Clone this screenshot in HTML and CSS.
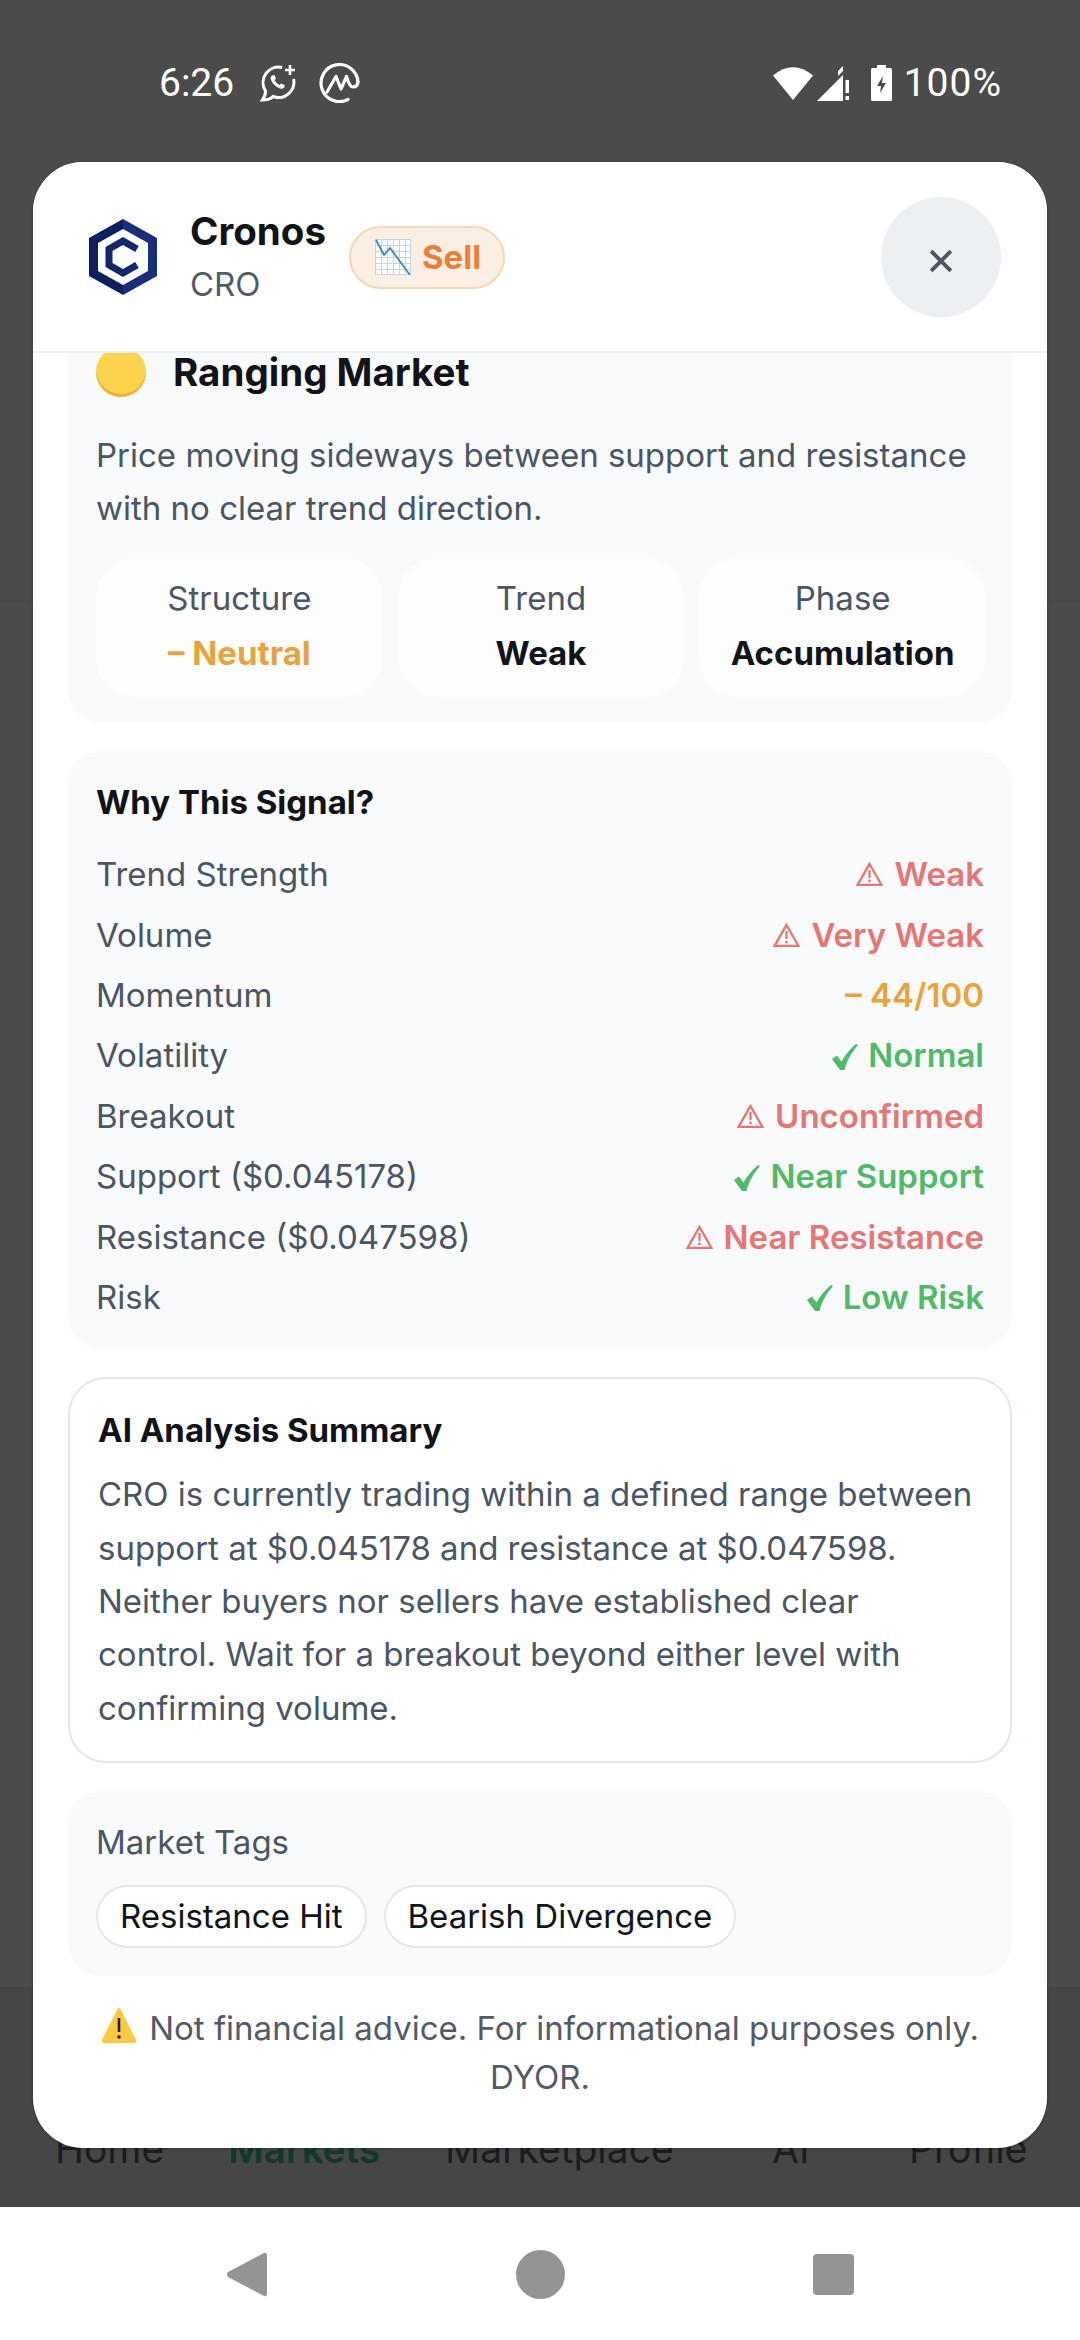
FILE: index.html
```html
<!DOCTYPE html>
<html lang="en">
<head>
    <meta charset="UTF-8">
    <title>Cronos signal</title>
    <link rel="stylesheet" href="styles.css">
</head>
<body>

<div class="phone">
  <svg width="0" height="0" class="defs">
    <symbol id="warn" viewBox="0 0 27 24">
      <path d="M13.500 2L25.500 23H1.500Z" fill="none" stroke="currentColor" stroke-width="2.400"/>
      <path d="M13.500 8V16" stroke="currentColor" stroke-width="2.200"/>
      <circle cx="13.500" cy="19" r="1.400" fill="currentColor"/>
    </symbol>
    <symbol id="tick" viewBox="0 0 26 26">
      <path d="M26 1C20 8 15 16 12.500 26H8L0 15L5 11.500L9.500 17.500C13 11 18 5 24 0Z" fill="currentColor"/>
    </symbol>
  </svg>
  <div class="screen">
    <div class="status-bar">
      <div class="status-left">
        <span class="clock">6:26</span>
        <svg class="ic-wa" viewBox="0 0 37 38" fill="none" stroke="#fff" stroke-width="3">
          <path d="M22 3.500A15.500 15.500 0 0 0 5.500 27Q5.500 32 2.500 36Q10 36 13 32.500A15.500 15.500 0 0 0 33.600 15"/>
          <path d="M12 11.500Q10 13 11 16Q13.500 22 20 24.500Q23 25.500 24.500 23L24.500 21L21 19.500L19.500 21Q16 19.500 14.500 16L16 14.500L14.500 11Z" fill="#fff" stroke="none"/>
          <path d="M30 1V11M25 6H35" stroke-width="2.600"/>
        </svg>
        <svg class="ic-cmc" viewBox="0 0 41 40" fill="none" stroke="#fff" stroke-width="3.200" stroke-linecap="round" stroke-linejoin="round">
          <path d="M29 36.500A18.500 18.500 0 1 1 39 19"/>
          <path d="M8 29L17 13.500L22 26L27.500 13.500Q30.500 24 34 24Q38.500 24 39 19"/>
        </svg>
      </div>
      <div class="status-right">
        <svg class="ic-wifi" viewBox="0 0 40 34"><path d="M0 9.500Q20 -7 40 9.500L20 34Z" fill="#fff"/></svg>
        <svg class="ic-signal" viewBox="0 0 33 35">
          <path d="M0 35L26 9V35Z" fill="#fff"/>
          <path d="M26 0V5L21 10V5Z" fill="#fff"/>
          <rect x="28.500" y="14" width="3.500" height="13" fill="#fff"/>
          <rect x="28.500" y="30" width="3.500" height="4" fill="#fff"/>
        </svg>
        <svg class="ic-batt" viewBox="0 0 21 36">
          <path d="M6 0H15V3H19.500Q21 3 21 4.500V34.500Q21 36 19.500 36H1.500Q0 36 0 34.500V4.500Q0 3 1.500 3H6Z" fill="#fff"/>
          <path d="M12 11L6 21H10L9 28L15 18H11Z" fill="#4b4b4b"/>
        </svg>
        <span class="batt-text">100%</span>
      </div>
    </div>

    <div class="bg-tabs">
      <span class="tab tab-home">Home</span>
      <span class="tab tab-markets">Markets</span>
      <span class="tab tab-place">Marketplace</span>
      <span class="tab tab-ai">AI</span>
      <span class="tab tab-profile">Profile</span>
    </div>

    <div class="modal">
      <div class="modal-head">
        <svg class="coin-logo" viewBox="0 0 68 76">
          <path d="M34 0L68 19V57L34 76Z" fill="#1a2f7c"/>
          <path d="M34 0L0 19V57L34 76Z" fill="#0e1f5e"/>
          <path d="M34 10L59 24V52L34 66L9 52V24Z" fill="#fff"/>
          <path d="M48 30L34 22L20 30V46L34 54L48 46" fill="none" stroke="#14276e" stroke-width="7"/>
        </svg>
        <div class="coin-name">
          <div class="coin-title">Cronos</div>
          <div class="coin-sym">CRO</div>
        </div>
        <div class="signal-pill">
          <svg class="ic-chart" viewBox="0 0 36 36">
            <rect x="0.500" y="0.500" width="35" height="35" fill="#fff" stroke="#c9d4da"/>
            <path d="M6.500 0V36M12.500 0V36M18.500 0V36M24.500 0V36M30.500 0V36M0 6.500H36M0 12.500H36M0 18.500H36M0 24.500H36M0 30.500H36" stroke="#c9d4da" stroke-width="1"/>
            <path d="M1 1L9 16L15 9L35 36" fill="none" stroke="#3b88c3" stroke-width="1.800"/>
          </svg>
          <span>Sell</span>
        </div>
        <button class="close-btn">
          <svg viewBox="0 0 22 22" width="24" height="24"><path d="M2 2L20 20M20 2L2 20" stroke="#4f5560" stroke-width="3.500"/></svg>
        </button>
      </div>

      <div class="modal-body">
        <section class="panel regime">
          <div class="regime-head">
            <span class="yellow-dot"></span>
            <h2>Ranging Market</h2>
          </div>
          <p class="regime-desc">Price moving sideways between support and resistance with no clear trend direction.</p>
          <div class="mini-row">
            <div class="mini-card"><div>Structure</div><b class="amber">– Neutral</b></div>
            <div class="mini-card"><div>Trend</div><b>Weak</b></div>
            <div class="mini-card"><div>Phase</div><b>Accumulation</b></div>
          </div>
        </section>

        <section class="panel why">
          <h3>Why This Signal?</h3>
          <div class="row"><span>Trend Strength</span><b class="red"><svg class="ic-warn-line"><use href="#warn"/></svg>Weak</b></div>
          <div class="row"><span>Volume</span><b class="red"><svg class="ic-warn-line"><use href="#warn"/></svg>Very Weak</b></div>
          <div class="row"><span>Momentum</span><b class="amber">– 44/100</b></div>
          <div class="row"><span>Volatility</span><b class="green"><svg class="ic-tick"><use href="#tick"/></svg>Normal</b></div>
          <div class="row"><span>Breakout</span><b class="red"><svg class="ic-warn-line"><use href="#warn"/></svg>Unconfirmed</b></div>
          <div class="row"><span>Support ($0.045178)</span><b class="green"><svg class="ic-tick"><use href="#tick"/></svg>Near Support</b></div>
          <div class="row"><span>Resistance ($0.047598)</span><b class="red"><svg class="ic-warn-line"><use href="#warn"/></svg>Near Resistance</b></div>
          <div class="row"><span>Risk</span><b class="green"><svg class="ic-tick"><use href="#tick"/></svg>Low Risk</b></div>
        </section>

        <section class="summary">
          <h3>AI Analysis Summary</h3>
          <p>CRO is currently trading within a defined range between support at $0.045178 and resistance at $0.047598. Neither buyers nor sellers have established clear control. Wait for a breakout beyond either level with confirming volume.</p>
        </section>

        <section class="panel tags">
          <div class="tags-label">Market Tags</div>
          <div class="chip-row">
            <span class="chip">Resistance Hit</span>
            <span class="chip">Bearish Divergence</span>
          </div>
        </section>

        <p class="disclaimer">
          <svg class="ic-warn" viewBox="0 0 36 36">
            <path d="M18 1Q19.500 1 20 3L35 33Q36 36 33 36H3Q0 36 1 33L16 3Q16.500 1 18 1Z" fill="#fcc945"/>
            <path d="M18 11V25" stroke="#231f20" stroke-width="2.600"/>
            <circle cx="18" cy="30" r="1.800" fill="#231f20"/>
          </svg> Not financial advice. For informational purposes only. DYOR.
        </p>
      </div>
    </div>
  </div>

  <div class="nav-bar">
    <svg class="nav-back" viewBox="0 0 41 45"><path d="M38 1Q41 0 41 4V41Q41 45 38 44L2 25Q0 22.500 2 20Z" fill="#949494"/></svg>
    <span class="nav-home"></span>
    <span class="nav-recent"></span>
  </div>
</div>

</body>
</html>
```

FILE: styles.css
```css
* {
	box-sizing: border-box;
}
html, body {
	margin: 0;
	padding: 0;
}
body {
	font-family: Inter, "DejaVu Sans", sans-serif;
	color: #111318;
}
h2, h3, p {
	margin: 0;
}
.defs {
	display: none;
}
.phone {
	width: 1080px;
	height: 2340px;
	display: flex;
	flex-direction: column;
	overflow: hidden;
}
.screen {
	position: relative;
	flex: 1;
	background-color: #4b4b4b;
	display: flex;
	flex-direction: column;
	justify-content: space-between;
}
/* Faint card edge of the page behind the dialog */
.screen::before {
	content: "";
	position: absolute;
	left: 0;
	right: 0;
	top: 600px;
	height: 2px;
	background-color: #474747;
}

/* Status bar */
.status-bar {
	display: flex;
	justify-content: space-between;
	align-items: center;
	height: 60px;
	margin-top: 53px;
	padding: 0 78px 0 159px;
	color: #fff;
	font-family: Roboto, sans-serif;
	font-size: 39px;
}
.status-left, .status-right {
	display: flex;
	align-items: center;
}
.clock {
	width: 101px;
}
.ic-wa {
	width: 37px;
	height: 38px;
	margin-right: 22px;
}
.ic-cmc {
	width: 41px;
	height: 40px;
}
.ic-wifi {
	width: 40px;
	height: 34px;
	margin-right: 4px;
}
.ic-signal {
	width: 33px;
	height: 35px;
	margin-right: 21px;
}
.ic-batt {
	width: 21px;
	height: 36px;
	margin-right: 12px;
}
.batt-text {
	letter-spacing: 1px;
}

/* Tab bar behind the dialog */
.bg-tabs {
	height: 220px;
	padding-top: 136px;
	border-top: 1px solid #424242;
	background-color: #464646;
	display: flex;
	font-size: 39px;
	line-height: 50px;
	color: #1c1c1c;
}
.tab {
	display: block;
	text-align: center;
	white-space: nowrap;
}
.tab-home {
	width: 107px;
	margin-left: 55px;
}
.tab-markets {
	width: 152px;
	margin-left: 66px;
	font-size: 38.5px;
	font-weight: 600;
	color: #10392a;
}
.tab-place {
	width: 227px;
	margin-left: 65px;
}
.tab-ai {
	width: 36px;
	margin-left: 100px;
}
.tab-profile {
	width: 117px;
	margin-left: 101px;
}

/* Dialog */
.modal {
	position: absolute;
	left: 33px;
	top: 162px;
	width: 1014px;
	height: 1986px;
	background-color: #fff;
	border-radius: 50px;
	overflow: hidden;
	display: flex;
	flex-direction: column;
	box-shadow: 0 1px 3px rgba(0, 0, 0, 0.25);
}
.modal-head {
	height: 191px;
	flex-shrink: 0;
	padding: 0 46px 0 56px;
	border-bottom: 2px solid #eff1f4;
	display: flex;
	align-items: center;
	background-color: #fff;
	position: relative;
	z-index: 1;
}
.coin-logo {
	width: 68px;
	height: 76px;
	margin-right: 33px;
}
.coin-name {
	margin-right: 23px;
}
.coin-title {
	font-size: 38.5px;
	font-weight: 700;
	line-height: 50px;
}
.coin-sym {
	font-size: 33px;
	line-height: 46px;
	color: #555a68;
	margin-top: 5px;
}
.signal-pill {
	width: 156px;
	height: 63px;
	border: 2px solid #f6d8b8;
	border-radius: 32px;
	background-color: #fbeee2;
	display: flex;
	align-items: center;
	padding-left: 24px;
	gap: 11px;
	font-size: 33px;
	font-weight: 700;
	color: #e9803a;
	margin-top: 1px;
}
.ic-chart {
	width: 36px;
	height: 36px;
}
.close-btn {
	width: 120px;
	height: 120px;
	margin-left: auto;
	margin-top: 1px;
	border: none;
	border-radius: 50%;
	background-color: #edf0f3;
	padding: 8px 0 0 0;
	display: flex;
	align-items: center;
	justify-content: center;
}

.modal-body {
	flex: 1;
	padding: 0 35px;
}
.panel {
	background-color: #f8fafc;
	border-radius: 33px;
	padding: 28px;
	margin-bottom: 28px;
}

/* Market regime, scrolled up under the dialog header */
.regime {
	margin-top: -33px;
	padding-bottom: 26px;
	padding-right: 26px;
}
.regime-head {
	display: flex;
	align-items: center;
	gap: 27px;
	height: 48px;
}
.yellow-dot {
	width: 50px;
	height: 50px;
	flex-shrink: 0;
	border-radius: 50%;
	background-color: #fcd34d;
	box-shadow: inset 0 -3px 0 #f0b43c;
}
.regime-head h2 {
	font-size: 38.5px;
	line-height: 38px;
	font-weight: 700;
}
.regime-desc {
	margin-top: 32.5px;
	font-size: 33px;
	line-height: 53px;
	color: #4b5563;
}
.mini-row {
	display: grid;
	grid-template-columns: repeat(3, 1fr);
	gap: 15px;
	margin-top: 23.5px;
}
.mini-card {
	height: 139px;
	background-color: #fdfdfe;
	border-radius: 40px;
	font-size: 33px;
	line-height: 55px;
	color: #4b5563;
	text-align: center;
	padding-top: 13px;
}
.mini-card b {
	display: block;
	font-weight: 700;
	color: #111318;
}
.mini-card b.amber {
	color: #e8a33d;
}

/* Why this signal */
.why {
	padding-bottom: 22px;
}
.why h3, .summary h3 {
	font-size: 33px;
	font-weight: 700;
	line-height: 46px;
}
.why h3 {
	margin-bottom: 19px;
}
.row {
	display: flex;
	justify-content: space-between;
	align-items: center;
	height: 60.4px;
	font-size: 33px;
	color: #4b5563;
}
.row b {
	font-weight: 600;
	display: flex;
	align-items: center;
}
.ic-warn-line {
	width: 27px;
	height: 24px;
	margin-right: 11px;
}
.ic-tick {
	width: 26px;
	height: 26px;
	margin-right: 10px;
	margin-top: 3px;
}
.red {
	color: #e67676;
}
.amber {
	color: #e8a33d;
}
.green {
	color: #50ba68;
}

/* Summary */
.summary {
	border: 2px solid #dfe7f3;
	border-radius: 38px;
	padding: 28px 28px 26px 28px;
	margin-bottom: 28px;
}
.summary p {
	margin-top: 15px;
	font-size: 33px;
	line-height: 53.4px;
	color: #4b5563;
}

/* Tags */
.tags-label {
	font-size: 33px;
	line-height: 46px;
	color: #4b5563;
}
.chip-row {
	display: flex;
	gap: 17px;
	margin-top: 20px;
}
.chip {
	height: 63px;
	padding: 0 22px;
	background-color: #fff;
	border: 2px solid #e5e7eb;
	border-radius: 32px;
	font-size: 33px;
	line-height: 59px;
	color: #111318;
}

.disclaimer {
	font-size: 33px;
	line-height: 49px;
	color: #555a68;
	text-align: center;
}
.ic-warn {
	width: 36px;
	height: 36px;
	margin-right: 3px;
	vertical-align: -3px;
}

/* Nav bar */
.nav-bar {
	height: 133px;
	flex-shrink: 0;
	background-color: #fff;
	display: flex;
	align-items: center;
	padding: 2px 226px 0 226px;
	justify-content: space-between;
}
.nav-back {
	width: 41px;
	height: 45px;
}
.nav-home {
	width: 49px;
	height: 49px;
	border-radius: 50%;
	background-color: #949494;
}
.nav-recent {
	width: 41px;
	height: 41px;
	border-radius: 4px;
	background-color: #949494;
}
```
